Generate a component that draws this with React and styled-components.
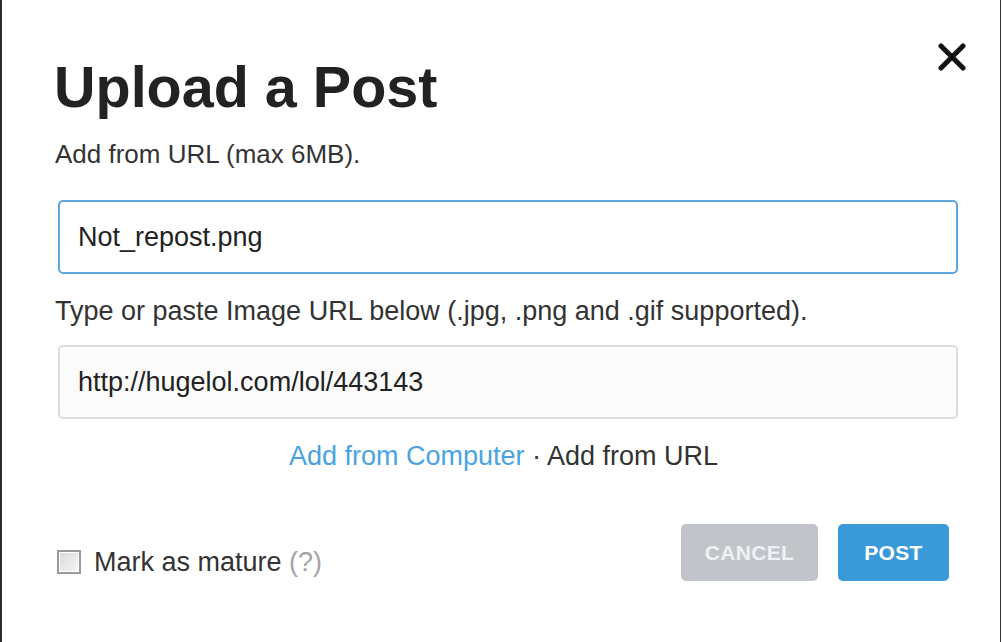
import React from "react";
import styled, { createGlobalStyle } from "styled-components";

const Global = createGlobalStyle`
  html, body { margin: 0; padding: 0; background: #fff; }
  body { font-family: "Liberation Sans", Arial, sans-serif; }
`;

const Frame = styled.div`
  position: relative;
  box-sizing: border-box;
  width: 1001px;
  height: 642px;
  border-left: 2px solid #2e2e2e;
  border-right: 1px solid #2e2e2e;
  background: #fff;
  padding: 59px 0 0 53px;
  display: flex;
  flex-direction: column;
  align-items: flex-start;
  color: #333;
`;

const Title = styled.h1`
  margin: 0 0 0 -1px;
  font-size: 57.5px;
  line-height: 57px;
  font-weight: bold;
  color: #222;
`;

const Text = styled.p`
  margin: ${(p) => p.$mt || 0}px 0 0 0;
  font-size: ${(p) => p.$size || 27}px;
  line-height: 30px;
  color: #333;
`;

const Input = styled.div`
  box-sizing: border-box;
  margin: ${(p) => p.$mt}px 0 0 3px;
  width: 900px;
  height: 74px;
  border: 2px solid ${(p) => (p.$focus ? "#5ea7dd" : "#dadde0")};
  border-radius: 5px;
  background: ${(p) => (p.$focus ? "#fff" : "#fbfbfb")};
  padding: 0 18px;
  display: flex;
  align-items: center;
  font-size: 27px;
  color: #222;
`;

const Links = styled.div`
  margin-top: 22px;
  width: 897px;
  text-align: center;
  font-size: 27px;
  line-height: 30px;
  color: #333;
`;

const Link = styled.span`
  color: #4aa3e0;
`;

const BottomRow = styled.div`
  margin-top: 53px;
  width: 894px;
  display: flex;
  align-items: flex-end;
  justify-content: space-between;
`;

const MatureGroup = styled.label`
  display: flex;
  align-items: center;
  gap: 13px;
  margin: 0 0 4px 2px;
  font-size: 27px;
  line-height: 30px;
  color: #333;
`;

const Check = styled.span`
  box-sizing: border-box;
  width: 24px;
  height: 24px;
  border: 2px solid #9a9a9a;
  box-shadow: inset 0 0 0 1px #fff;
  background: linear-gradient(135deg, #d9d9d9, #f6f6f6);
`;

const Hint = styled.span`
  color: #a3a3a3;
`;

const Buttons = styled.div`
  display: flex;
  gap: 20px;
`;

const Button = styled.button`
  box-sizing: border-box;
  width: ${(p) => p.$w}px;
  height: 57px;
  border: none;
  border-radius: 5px;
  background: ${(p) => (p.$primary ? "#3a9ad9" : "#c1c5c9")};
  color: ${(p) => (p.$primary ? "#fff" : "#eef2f6")};
  font-family: "Liberation Sans", Arial, sans-serif;
  font-size: 21px;
  font-weight: bold;
  letter-spacing: 0.3px;
  padding: 0;
`;

const Close = styled.button`
  position: absolute;
  top: 43px;
  left: 935px;
  width: 30px;
  height: 28px;
  padding: 0;
  border: none;
  background: none;
  display: flex;
`;

export default function App() {
  return (
    <>
      <Global />
      <Frame>
        <Close aria-label="Close">
          <svg width="30" height="28" viewBox="0 0 30 28">
            <path d="M4 3 L26 25 M26 3 L4 25" stroke="#111" strokeWidth="5" strokeLinecap="round" />
          </svg>
        </Close>
        <Title>Upload a Post</Title>
        <Text $mt={23} $size={26}>Add from URL (max 6MB).</Text>
        <Input $mt={31} $focus>Not_repost.png</Input>
        <Text $mt={22}>Type or paste Image URL below (.jpg, .png and .gif supported).</Text>
        <Input $mt={19}>http://hugelol.com/lol/443143</Input>
        <Links>
          <Link>Add from Computer</Link> · Add from URL
        </Links>
        <BottomRow>
          <MatureGroup>
            <Check />
            <span>
              Mark as mature <Hint>(?)</Hint>
            </span>
          </MatureGroup>
          <Buttons>
            <Button $w={137}>CANCEL</Button>
            <Button $w={111} $primary>POST</Button>
          </Buttons>
        </BottomRow>
      </Frame>
    </>
  );
}
